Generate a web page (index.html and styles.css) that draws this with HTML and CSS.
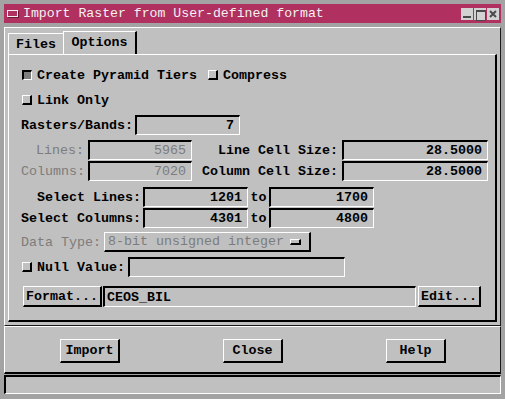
FILE: index.html
```html
<!DOCTYPE html>
<html lang="en">
<head>
  <meta charset="UTF-8" />
  <title>Import Raster from User-defined format</title>
  <link rel="stylesheet" href="styles.css">
</head>
<body>

  <div class="window">
    <div class="titlebar">
      <span class="menu-btn"></span>
      <span class="title">Import Raster from User-defined format</span>
      <span class="win-btns">
        <span class="wbtn min"></span>
        <span class="wbtn max"></span>
        <span class="wbtn close">
          <svg width="8" height="8" viewBox="0 0 8 8"><path d="M1 1L7 7M7 1L1 7" stroke="#4a4a4a" stroke-width="2"/></svg>
        </span>
      </span>
    </div>

    <div class="main">
      <div class="tabs">
        <div class="tab">Files</div>
        <div class="tab active">Options</div>
      </div>

      <div class="panel">
        <div class="row r1">
          <span class="check on"></span>
          <span class="check-label">Create Pyramid Tiers</span>
          <span class="check second"></span>
          <span class="check-label">Compress</span>
        </div>

        <div class="row r2">
          <span class="check"></span>
          <span class="check-label">Link Only</span>
        </div>

        <div class="row r3">
          <span class="label lbl-rasters">Rasters/Bands:</span>
          <span class="field w105">7</span>
        </div>

        <div class="row r4">
          <span class="label lbl-short disabled">Lines:</span>
          <span class="field w104 disabled">5965</span>
          <span class="label lbl-cell">Line Cell Size:</span>
          <span class="field w146">28.5000</span>
        </div>

        <div class="row r5">
          <span class="label lbl-short disabled">Columns:</span>
          <span class="field w104 disabled">7020</span>
          <span class="label lbl-cell">Column Cell Size:</span>
          <span class="field w146">28.5000</span>
        </div>

        <div class="row r6">
          <span class="label lbl-select">Select Lines:</span>
          <span class="field w105">1201</span>
          <span class="to">to</span>
          <span class="field w105">1700</span>
        </div>

        <div class="row r7">
          <span class="label lbl-select">Select Columns:</span>
          <span class="field w105">4301</span>
          <span class="to">to</span>
          <span class="field w105">4800</span>
        </div>

        <div class="row r8">
          <span class="label lbl-type disabled">Data Type:</span>
          <span class="option-menu disabled">8-bit unsigned integer<span class="indicator"></span></span>
        </div>

        <div class="row r9">
          <span class="check"></span>
          <span class="check-label lbl-null">Null Value:</span>
          <span class="field w217"></span>
        </div>

        <div class="row r10">
          <span class="btn btn-format">Format...</span>
          <span class="field text w313">CEOS_BIL</span>
          <span class="btn btn-edit">Edit...</span>
        </div>
      </div>
    </div>

    <div class="actions">
      <span class="btn action">Import</span>
      <span class="btn action">Close</span>
      <span class="btn action">Help</span>
    </div>

    <div class="status"></div>
  </div>

</body>
</html>
```

FILE: styles.css
```css
* {
  box-sizing: border-box;
}

body {
  margin: 0;
  background: #a3a3a3;
  font-family: "Liberation Mono", "DejaVu Sans Mono", monospace;
  font-size: 13.33px;
  font-weight: bold;
  color: #000;
}

.window {
  width: 505px;
  height: 399px;
  padding: 4px;
  display: flex;
  flex-direction: column;
}

/* title bar */
.titlebar {
  height: 19px;
  background: #b03060;
  display: flex;
  align-items: center;
  color: #f2f2f2;
  font-weight: normal;
  font-size: 13.2px;
  padding-right: 2px;
}

.menu-btn {
  width: 11px;
  height: 7px;
  margin-left: 3px;
  border: 1px solid #f0f0f0;
  box-shadow: 1px 1px 0 #6a1a38;
}

.title {
  margin-left: 5px;
  flex: 1;
}

.win-btns {
  display: flex;
  gap: 1px;
}

.wbtn {
  width: 12px;
  height: 12px;
  background: #d2d2d2;
  display: flex;
  align-items: center;
  justify-content: center;
  position: relative;
}

.wbtn.min::after {
  content: "";
  position: absolute;
  left: 2px;
  right: 2px;
  bottom: 2px;
  height: 2px;
  background: #4a4a4a;
}

.wbtn.max::after {
  content: "";
  position: absolute;
  left: 2px;
  top: 2px;
  width: 8px;
  height: 8px;
  border: 1px solid #4a4a4a;
  border-top-width: 2px;
}

/* main tabbed area */
.main {
  height: 299px;
  margin-top: 4px;
  background: #c0c0c0;
  border: 1px solid;
  border-color: #fff #1a1a1a #1a1a1a #fff;
  padding: 0 3px;
}

.tabs {
  height: 26px;
  display: flex;
  align-items: flex-end;
}

.tab {
  height: 21px;
  width: 55px;
  border-top: 1px solid #fff;
  border-left: 1px solid #fff;
  display: flex;
  align-items: center;
  justify-content: center;
}

.tab.active {
  height: 23px;
  width: 74px;
  border-right: 2px solid #000;
  padding-bottom: 1px;
}

.panel {
  height: 268px;
  border-style: solid;
  border-width: 1px 2px 2px 1px;
  border-color: #fff #000 #000 #fff;
  padding-left: 12px;
}

.row {
  display: flex;
  align-items: center;
  height: 20px;
}

.r1 { margin-top: 10px; }
.r2 { margin-top: 5px; }
.r3 { margin-top: 5px; }
.r4 { margin-top: 5px; }
.r5 { margin-top: 1px; }
.r6 { margin-top: 6px; }
.r7 { margin-top: 1px; }
.r8 { margin-top: 4px; }
.r9 { margin-top: 5px; }
.r10 { margin-top: 9px; height: 21px; }

/* toggles */
.check {
  width: 10px;
  height: 10px;
  margin-left: 1px;
  border-style: solid;
  border-width: 1px 2px 2px 1px;
  border-color: #fff #000 #000 #fff;
  background: #c0c0c0;
}

.check.on {
  border-width: 2px 1px 1px 2px;
  border-color: #000 #fff #fff #000;
  background: #7f7f7f;
}

.check.second {
  margin-left: 11px;
}

.check-label {
  margin-left: 5px;
}

.lbl-null {
  width: 91px;
}

/* labels */
.label {
  white-space: nowrap;
}

.lbl-rasters { width: 114px; }
.lbl-short { width: 67px; text-align: right; padding-right: 4px; }
.lbl-cell { width: 150px; text-align: right; padding-right: 4px; }
.lbl-select { width: 122px; text-align: right; padding-right: 2px; }
.lbl-type { width: 83px; }

.disabled {
  color: #7c7c7c;
  font-weight: normal;
}

/* sunken fields */
.field {
  height: 20px;
  border-style: solid;
  border-width: 2px 1px 1px 2px;
  border-color: #000 #fff #fff #000;
  display: flex;
  align-items: center;
  justify-content: flex-end;
  padding-right: 5px;
  white-space: nowrap;
}

.field.text {
  height: 21px;
  justify-content: flex-start;
  padding-left: 2px;
  margin-left: 1px;
}

.w104 { width: 104px; }
.w105 { width: 105px; }
.w146 { width: 146px; }
.w217 { width: 217px; }
.w313 { width: 313px; }

.to {
  width: 21px;
  text-align: center;
}

/* raised controls */
.option-menu,
.btn {
  border-style: solid;
  border-width: 1px 2px 2px 1px;
  border-color: #fff #000 #000 #fff;
  display: flex;
  align-items: center;
  white-space: nowrap;
}

.option-menu {
  width: 207px;
  height: 20px;
  padding-left: 3px;
}

.indicator {
  width: 11px;
  height: 6px;
  margin-left: 6px;
  border-style: solid;
  border-width: 1px 2px 2px 1px;
  border-color: #fff #000 #000 #fff;
}

.btn {
  justify-content: center;
  height: 21px;
}

.btn-format {
  width: 79px;
  margin-left: 2px;
}

.btn-edit {
  width: 63px;
  margin-left: 2px;
}

/* bottom */
.actions {
  height: 48px;
  background: #c0c0c0;
  border: 1px solid;
  border-color: #fff #1a1a1a #000 #fff;
  border-bottom-width: 2px;
  display: flex;
  align-items: flex-start;
  padding: 12px 0 0 55px;
  gap: 103px;
}

.btn.action {
  width: 60px;
  height: 24px;
}

.status {
  height: 19px;
  margin-top: 1px;
  background: #c0c0c0;
  border-style: solid;
  border-width: 2px 1px 1px 2px;
  border-color: #000 #fff #fff #000;
}
```
